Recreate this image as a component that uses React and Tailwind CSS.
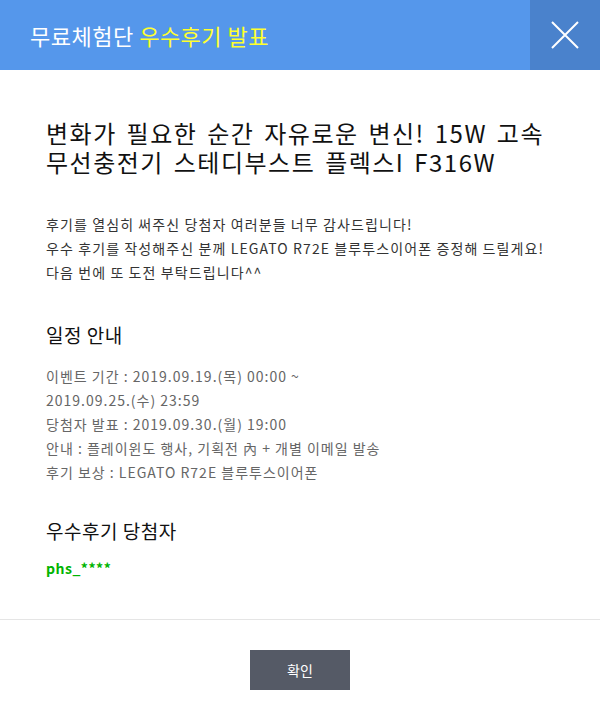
import React from "react";

export default function App() {
  const font = { fontFamily: '"Noto Sans CJK KR", "Noto Sans", sans-serif' };
  return (
    <div className="w-[600px] h-[720px] flex flex-col bg-white" style={font}>
      <header className="h-[70px] flex bg-[#5597eb]">
        <div className="flex-1 pl-[30px] flex items-center text-[22px] text-white leading-none tracking-[0.5px]">
          <span>무료체험단&nbsp;</span>
          <span className="text-[#ffff2e]">우수후기 발표</span>
        </div>
        <button className="w-[70px] h-[70px] bg-[#4a82cc] flex items-center justify-center">
          <svg width="28" height="28" viewBox="0 0 28 28" fill="none">
            <path d="M1 1L27 27M27 1L1 27" stroke="white" strokeWidth="2" />
          </svg>
        </button>
      </header>
      <main className="flex-1 px-[46px] pt-[48px]">
        <h1 className="text-[24px] leading-[29px] text-[#111] tracking-[1.5px] [word-spacing:3px]">
          <span className="block">변화가 필요한 순간 자유로운 변신! 15W 고속</span>
          <span className="block">무선충전기 스테디부스트 플렉스I F316W</span>
        </h1>
        <p className="mt-[36px] text-[14px] leading-[24px] text-[#333] tracking-[1.1px]">
          후기를 열심히 써주신 당첨자 여러분들 너무 감사드립니다!
          <br />
          우수 후기를 작성해주신 분께 LEGATO R72E 블루투스이어폰 증정해 드릴게요!
          <br />
          다음 번에 또 도전 부탁드립니다^^
        </p>
        <h2 className="mt-[39px] text-[19px] leading-[24px] text-[#111] tracking-[0.5px]">일정 안내</h2>
        <div className="mt-[17px] text-[14px] leading-[24px] text-[#666] tracking-[1px]">
          <p>
            이벤트 기간 : 2019.09.19.(목) 00:00 ~
            <br />
            2019.09.25.(수) 23:59
          </p>
          <p>당첨자 발표 : 2019.09.30.(월) 19:00</p>
          <p>안내 : 플레이윈도 행사, 기획전 內 + 개별 이메일 발송</p>
          <p>후기 보상 : LEGATO R72E 블루투스이어폰</p>
        </div>
        <h2 className="mt-[35px] text-[19px] leading-[24px] text-[#111] tracking-[0.5px]">우수후기 당첨자</h2>
        <p className="mt-[13px] text-[14px] leading-[24px] font-bold text-[#00b400] tracking-[0.5px]">phs_****</p>
      </main>
      <footer className="h-[101px] border-t border-[#e5e5e5] flex justify-center pt-[30px]">
        <button className="w-[100px] h-[40px] bg-[#555a66] text-white text-[14px]">확인</button>
      </footer>
    </div>
  );
}
